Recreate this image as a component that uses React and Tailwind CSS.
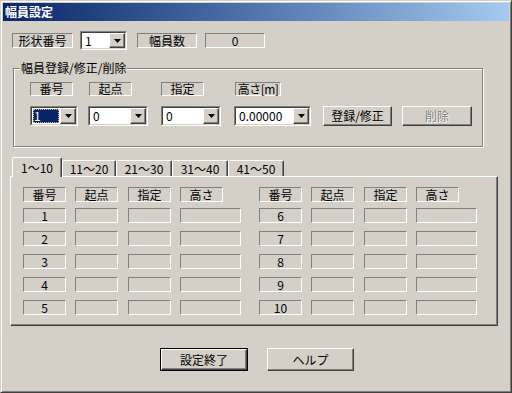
const sunken = 'border border-t-[#808080] border-l-[#808080] border-b-white border-r-white'
const raised = 'border border-t-white border-l-white border-b-[#404040] border-r-[#404040] shadow-[inset_-1px_-1px_0_#808080]'

function Label({ className, children }) {
  return (
    <div className={`${sunken} flex items-center justify-center whitespace-nowrap text-[12px] leading-none shrink-0 ${className}`}>
      {children}
    </div>
  )
}

function Arrow() {
  return (
    <svg width="7" height="4" viewBox="0 0 7 4">
      <path d="M0 0h7L3.5 4z" fill="#000" />
    </svg>
  )
}

function Combo({ className, value, focused }) {
  return (
    <div className={`${sunken} flex shrink-0 ${className}`}>
      <div className="flex flex-1 border border-t-[#404040] border-l-[#404040] border-b-[#d4d0c8] border-r-[#d4d0c8] bg-white">
        <div className="flex flex-1 items-center p-[1px]">
          {focused ? (
            <div className="flex h-full flex-1 items-center bg-[#0a246a] pl-[1px] text-white outline-1 outline-dotted outline-[#d4c080] -outline-offset-1">
              {value}
            </div>
          ) : (
            <div className="pl-[2px]">{value}</div>
          )}
        </div>
        <div className={`${raised} flex w-[16px] items-center justify-center bg-[#d4d0c8]`}>
          <Arrow />
        </div>
      </div>
    </div>
  )
}

function Button({ className, children, disabled, isDefault }) {
  const inner = (
    <div
      className={`${raised} flex h-full w-full items-center justify-center text-[12px] ${
        disabled ? 'text-[#808080] [text-shadow:1px_1px_0_#fff]' : 'text-black'
      }`}
    >
      {children}
    </div>
  )
  if (isDefault) {
    return <div className={`shrink-0 border border-black ${className}`}>{inner}</div>
  }
  return <div className={`shrink-0 ${className}`}>{inner}</div>
}

const tabs = ['11〜20', '21〜30', '31〜40', '41〜50']

function Column({ start }) {
  const rows = [0, 1, 2, 3, 4].map((i) => start + i)
  return (
    <div className="flex flex-col">
      <div className="flex">
        <Label className="h-[15px] w-[43px]">番号</Label>
        <Label className="ml-[9px] h-[15px] w-[43px]">起点</Label>
        <Label className="ml-[10px] h-[15px] w-[43px]">指定</Label>
        <Label className="ml-[9px] h-[15px] w-[43px]">高さ</Label>
      </div>
      <div className="mt-[6px] flex flex-col gap-[8px]">
        {rows.map((n) => (
          <div key={n} className="flex">
            <Label className="h-[15px] w-[43px]">{n}</Label>
            <Label className="ml-[9px] h-[15px] w-[43px]" />
            <Label className="ml-[10px] h-[15px] w-[43px]" />
            <Label className="ml-[9px] h-[15px] w-[61px]" />
          </div>
        ))}
      </div>
    </div>
  )
}

export default function App() {
  return (
    <div className="h-[393px] w-[512px] overflow-hidden border border-t-[#d4d0c8] border-l-[#d4d0c8] border-b-[#404040] border-r-[#404040] bg-[#d4d0c8] p-[2px] font-['Noto_Sans_CJK_JP','Noto_Sans',sans-serif] text-[12px] text-black shadow-[inset_1px_1px_0_#fff,inset_-1px_-1px_0_#808080]">
      <div className="flex h-[18px] items-center bg-linear-to-r from-[#0a246a] to-[#a6caf0] pl-[2px] text-[12px] font-bold text-white">
        幅員設定
      </div>

      <div className="mt-[10px] flex h-[19px] items-center pl-[9px]">
        <Label className="h-[15px] w-[61px]">形状番号</Label>
        <Combo className="ml-[7px] h-[19px] w-[47px]" value="1" />
        <Label className="ml-[10px] h-[15px] w-[60px]">幅員数</Label>
        <Label className="ml-[8px] h-[15px] w-[60px]">0</Label>
      </div>

      <div className="relative ml-[10px] mt-[18px] h-[79px] w-[470px] border border-[#808080] pl-[16px] pt-[13px] shadow-[inset_1px_1px_0_#fff,1px_1px_0_#fff]">
        <div className="absolute -top-[8px] left-[6px] bg-[#d4d0c8] px-[1px] leading-[14px]">幅員登録/修正/削除</div>
        <div className="flex">
          <Label className="h-[14px] w-[43px]">番号</Label>
          <Label className="ml-[16px] h-[14px] w-[43px]">起点</Label>
          <Label className="ml-[29px] h-[14px] w-[43px]">指定</Label>
          <Label className="ml-[31px] h-[14px] w-[46px] tracking-[-0.5px]">高さ[m]</Label>
        </div>
        <div className="mt-[10px] flex h-[20px]">
          <Combo className="w-[48px]" value="1" focused />
          <Combo className="ml-[10px] w-[60px]" value="0" />
          <Combo className="ml-[13px] w-[60px]" value="0" />
          <Combo className="ml-[13px] w-[77px]" value="0.00000" />
          <Button className="ml-[12px] h-[20px] w-[69px]">登録/修正</Button>
          <Button className="ml-[10px] h-[20px] w-[70px]" disabled>削除</Button>
        </div>
      </div>

      <div className="ml-[7px] mt-[11px] flex h-[18px] items-end pl-[2px]">
        <div className="relative z-10 -mb-px flex h-[20px] w-[50px] items-center justify-center rounded-t-[2px] border-l border-t border-r border-l-white border-t-white border-r-[#404040] bg-[#d4d0c8] shadow-[inset_-1px_0_0_#808080]">
          1〜10
        </div>
        {tabs.map((t, i) => (
          <div
            key={t}
            className={`flex h-[16px] items-center justify-center rounded-t-[2px] border-l border-t border-r border-l-white border-t-white border-r-[#404040] shadow-[inset_-1px_0_0_#808080] ${
              i === 0 ? 'w-[54px]' : 'w-[56px]'
            }`}
          >
            {t}
          </div>
        ))}
      </div>
      <div className="ml-[7px] flex h-[150px] w-[488px] gap-[18px] border border-t-white border-l-white border-b-[#404040] border-r-[#404040] pl-[12px] pt-[10px] shadow-[inset_-1px_-1px_0_#808080]">
        <Column start={1} />
        <Column start={6} />
      </div>

      <div className="mt-[22px] flex justify-center gap-[19px] pl-[2px]">
        <Button className="h-[23px] w-[88px]" isDefault>設定終了</Button>
        <Button className="h-[23px] w-[87px]">ヘルプ</Button>
      </div>
    </div>
  )
}
